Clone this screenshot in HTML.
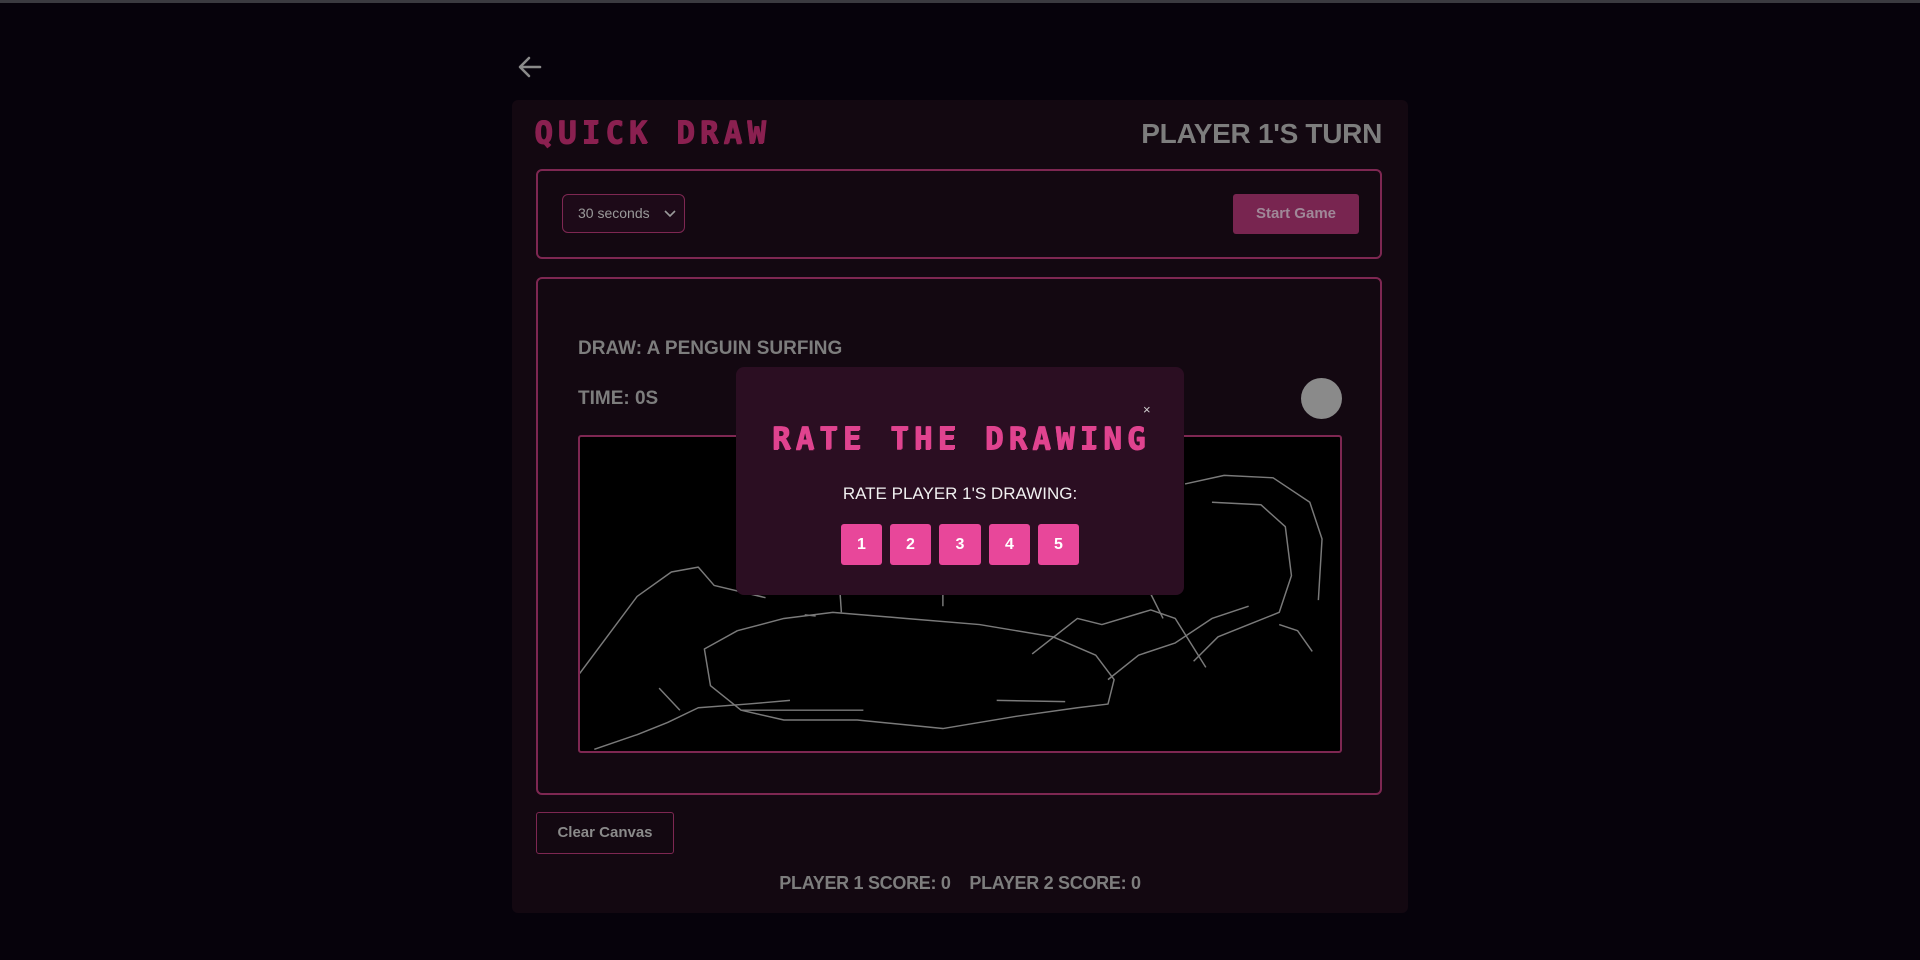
<!DOCTYPE html>
<html><head><meta charset="utf-8"><style>
*{box-sizing:border-box;margin:0;padding:0}
body{width:1920px;height:960px;background:#06020b;position:relative;overflow:hidden;font-family:"Liberation Sans",sans-serif;color:#808080}
.topline{position:absolute;left:0;top:0;width:1920px;height:3px;background:#3a3a40}
.abs{position:absolute}
.panel{left:512px;top:100px;width:896px;height:813px;background:#130811;border-radius:6px}
.pix{font-family:"DejaVu Sans Mono","Liberation Mono",monospace;font-weight:bold;letter-spacing:5px;white-space:nowrap}
.box{border:2px solid #7e2752;border-radius:6px}
.b{font-weight:bold}
.rb{width:41px;height:41px;background:#e8479a;border-radius:3px;color:#fff;font-weight:bold;font-size:16px;line-height:41px;text-align:center}
</style></head><body>
<div class="topline"></div>
<svg class="abs" style="left:516px;top:54px" width="28" height="26" viewBox="0 0 28 26"><path d="M24 13H5M13 4L4 13l9 9" stroke="#8a8a8a" stroke-width="2.6" fill="none" stroke-linecap="round" stroke-linejoin="round"/></svg>
<div class="abs panel"></div>
<div class="abs pix" style="left:534px;top:113px;font-size:31px;color:#8a2050;line-height:40px;text-shadow:1px 0 0 #8a2050,0 1px 0 #8a2050">QUICK DRAW</div>
<div class="abs b" style="right:538px;top:116px;font-size:28px;line-height:36px;color:#7d7d7d;letter-spacing:-0.3px">PLAYER 1'S TURN</div>
<div class="abs box" style="left:536px;top:169px;width:846px;height:90px"></div>
<div class="abs" style="left:562px;top:194px;width:123px;height:39px;border:1px solid #7e2752;border-radius:6px;background:#1d0a18;font-size:14px;line-height:37px;padding-left:15px;color:#9a9a9a">30 seconds
<svg class="abs" style="left:101px;top:15px" width="12" height="8" viewBox="0 0 12 8"><path d="M1 1l5 5 5-5" stroke="#9a9a9a" stroke-width="1.6" fill="none"/></svg></div>
<div class="abs b" style="left:1233px;top:194px;width:126px;height:40px;background:#782550;border-radius:3px;font-size:15px;line-height:40px;text-align:center;color:#a08898">Start Game</div>
<div class="abs box" style="left:536px;top:277px;width:846px;height:518px"></div>
<div class="abs b" style="left:578px;top:338px;font-size:19px;color:#7d7d7d">DRAW: A PENGUIN SURFING</div>
<div class="abs b" style="left:578px;top:388px;font-size:19px;color:#7d7d7d">TIME: 0S</div>
<div class="abs" style="left:1301px;top:378px;width:41px;height:41px;border-radius:50%;background:#8a8a8a"></div>
<div class="abs" style="left:578px;top:435px;width:764px;height:318px;background:#000;border:2px solid #7e2752;border-radius:3px;overflow:hidden">
<svg width="764" height="318" viewBox="0 0 624 260" style="display:block;margin:-2px"><g stroke="#7a7a7a" stroke-width="1.2" fill="none" stroke-linejoin="round">
<polyline points="1,195 48,132 76,112 98,108 111,123 153,133"/>
<polyline points="130,160 103,175 108,205 133,225 168,233 228,233 298,240 358,230 408,223 433,220 438,200 423,180 388,165 328,155 268,150 208,145 168,150 130,160"/>
<polyline points="13,257 48,245 73,235 98,223 138,220 173,217"/>
<polyline points="66,207 83,225"/>
<polyline points="133,225 233,225"/>
<polyline points="342,217 398,218"/>
<polyline points="371,179 408,150 428,155 468,143 488,150 513,190"/>
<polyline points="433,200 458,180 488,170 518,150 548,140"/>
<polyline points="496,40 528,33 568,35 598,55 608,85 605,135"/>
<polyline points="518,55 558,57 578,75 583,115 573,145 548,155 523,165 503,185"/>
<polyline points="573,155 588,160 600,177"/>
<polyline points="468,130 478,150"/>
<polyline points="298,130 298,140"/><polyline points="214,130 215,145"/><polyline points="185,147 194,148"/>
</g></svg></div>
<div class="abs" style="left:536px;top:812px;width:138px;height:42px;border:1px solid #7e2752;border-radius:3px;font-size:15px;line-height:40px;text-align:center;font-weight:bold;color:#8a8a8a">Clear Canvas</div>
<div class="abs b" style="left:0;width:1920px;text-align:center;top:873px;font-size:18px;color:#7d7d7d;letter-spacing:-0.3px">PLAYER 1 SCORE: 0 &nbsp;&nbsp; PLAYER 2 SCORE: 0</div>
<div class="abs" style="left:736px;top:367px;width:448px;height:228px;background:#2b0e22;border-radius:8px"></div>
<div class="abs" style="left:1143px;top:402px;font-size:13px;color:#d0d0d0">×</div>
<div class="abs pix" style="left:736px;width:448px;text-align:center;top:419px;font-size:31px;line-height:40px;color:#e0438f;padding-left:2px;text-shadow:1px 0 0 #e0438f,0 1px 0 #e0438f">RATE THE DRAWING</div>
<div class="abs" style="left:736px;width:448px;text-align:center;top:484px;font-size:17px;color:#f0f0f0">RATE PLAYER 1'S DRAWING:</div>
<div class="abs" style="left:841px;top:524px;display:flex;gap:8px">
<div class="rb">1</div><div class="rb">2</div><div class="rb" style="width:42px">3</div><div class="rb">4</div><div class="rb">5</div>
</div>
</body></html>
